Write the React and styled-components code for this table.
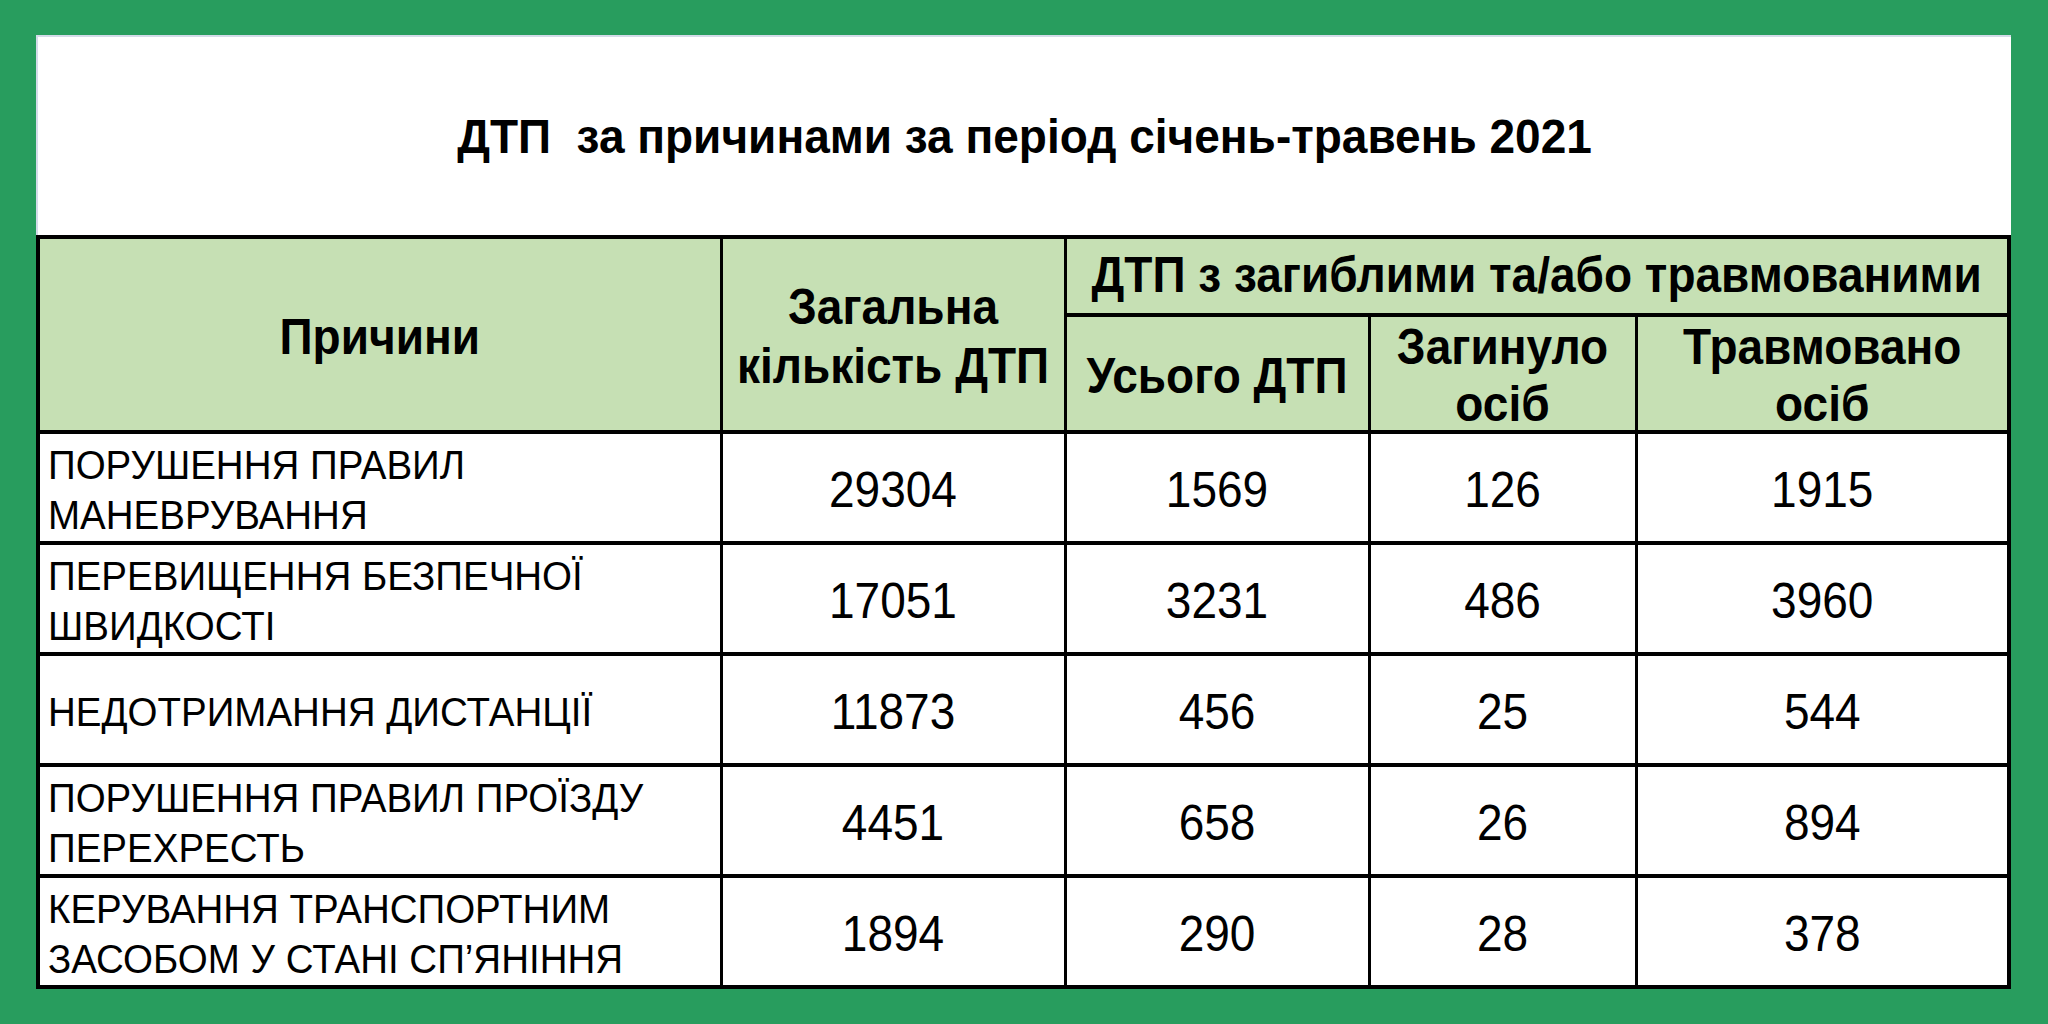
import React from 'react'
import styled, { createGlobalStyle } from 'styled-components'

const Global = createGlobalStyle`
  html, body {
    margin: 0;
    padding: 0;
    background: #289d5e;
  }
  * {
    box-sizing: border-box;
  }
`

const Page = styled.div`
  width: 2048px;
  height: 1024px;
  background: #289d5e;
  padding: 35px 37px 37px 36px;
  font-family: "Liberation Sans", Arial, sans-serif;
  color: #000;
`

const Sheet = styled.div`
  background: #fff;
  border-top: 2px solid #d4dbe9;
  border-left: 2px solid #d4dbe9;
  display: flex;
  flex-direction: column;
`

const TitleBar = styled.div`
  height: 198px;
  display: flex;
  align-items: center;
  justify-content: center;
  font-size: 46px;
  font-weight: bold;
  white-space: pre;
`

// the source slide uses slightly tall, narrow glyphs
const Tall = styled.span`
  display: inline-block;
  transform: scaleY(${p => p.$sy || 1.07});
  transform-origin: center;
`

const Table = styled.table`
  border-collapse: collapse;
  table-layout: fixed;
  border: 4px solid #000;
  margin-left: -2px;
  width: calc(100% + 2px);
`

const HeadCell = styled.th`
  background: #c6e0b4;
  border-top: 4px solid #000;
  border-bottom: 4px solid #000;
  border-left: 3px solid #000;
  border-right: 3px solid #000;
  font-size: 46px;
  font-weight: bold;
  line-height: ${p => p.$lh || 1.2};
  text-align: center;
  vertical-align: middle;
  padding: ${p => p.$pt || 0}px 4px 0;
  height: ${p => p.$h}px;
`

const Cell = styled.td`
  border-top: 4px solid #000;
  border-bottom: 4px solid #000;
  border-left: 3px solid #000;
  border-right: 3px solid #000;
  height: 111px;
  vertical-align: middle;
  text-align: ${p => (p.$reason ? 'left' : 'center')};
  font-size: ${p => (p.$reason ? 38.5 : 46)}px;
  line-height: 1.2;
  padding: ${p => (p.$reason ? '6px 0 0 8px' : '6px 0 0')};
`

const rows = [
  { reason: ['ПОРУШЕННЯ ПРАВИЛ', 'МАНЕВРУВАННЯ'], total: 29304, all: 1569, dead: 126, hurt: 1915 },
  { reason: ['ПЕРЕВИЩЕННЯ БЕЗПЕЧНОЇ', 'ШВИДКОСТІ'], total: 17051, all: 3231, dead: 486, hurt: 3960 },
  { reason: ['НЕДОТРИМАННЯ ДИСТАНЦІЇ'], total: 11873, all: 456, dead: 25, hurt: 544 },
  { reason: ['ПОРУШЕННЯ ПРАВИЛ ПРОЇЗДУ', 'ПЕРЕХРЕСТЬ'], total: 4451, all: 658, dead: 26, hurt: 894 },
  { reason: ['КЕРУВАННЯ ТРАНСПОРТНИМ', 'ЗАСОБОМ У СТАНІ СП’ЯНІННЯ'], total: 1894, all: 290, dead: 28, hurt: 378 },
]

const Lines = ({ lines }) => (
  <Tall>
    {lines.map((line, j) => (
      <React.Fragment key={j}>
        {j > 0 && <br />}
        {line}
      </React.Fragment>
    ))}
  </Tall>
)

const App = () => {
  return (
    <Page>
      <Global />
      <Sheet>
        <TitleBar>
          <Tall $sy={1.05}>{'ДТП  за причинами за період січень-травень 2021'}</Tall>
        </TitleBar>
        <Table>
          <colgroup>
            <col style={{ width: 683 }} />
            <col style={{ width: 344 }} />
            <col style={{ width: 304 }} />
            <col style={{ width: 267 }} />
            <col />
          </colgroup>
          <thead>
            <tr>
              <HeadCell rowSpan={2} $h={78} $pt={6}><Tall>Причини</Tall></HeadCell>
              <HeadCell rowSpan={2} $h={78} $pt={6}><Lines lines={['Загальна', 'кількість ДТП']} /></HeadCell>
              <HeadCell colSpan={3} $h={78}><Tall>ДТП з загиблими та/або травмованими</Tall></HeadCell>
            </tr>
            <tr>
              <HeadCell $h={117} $lh={1.16} $pt={6}><Tall>Усього ДТП</Tall></HeadCell>
              <HeadCell $h={117} $lh={1.16} $pt={6}><Lines lines={['Загинуло', 'осіб']} /></HeadCell>
              <HeadCell $h={117} $lh={1.16} $pt={6}><Lines lines={['Травмовано', 'осіб']} /></HeadCell>
            </tr>
          </thead>
          <tbody>
            {rows.map((r, i) => (
              <tr key={i}>
                <Cell $reason><Lines lines={r.reason} /></Cell>
                <Cell><Tall>{r.total}</Tall></Cell>
                <Cell><Tall>{r.all}</Tall></Cell>
                <Cell><Tall>{r.dead}</Tall></Cell>
                <Cell><Tall>{r.hurt}</Tall></Cell>
              </tr>
            ))}
          </tbody>
        </Table>
      </Sheet>
    </Page>
  )
}

export default App
